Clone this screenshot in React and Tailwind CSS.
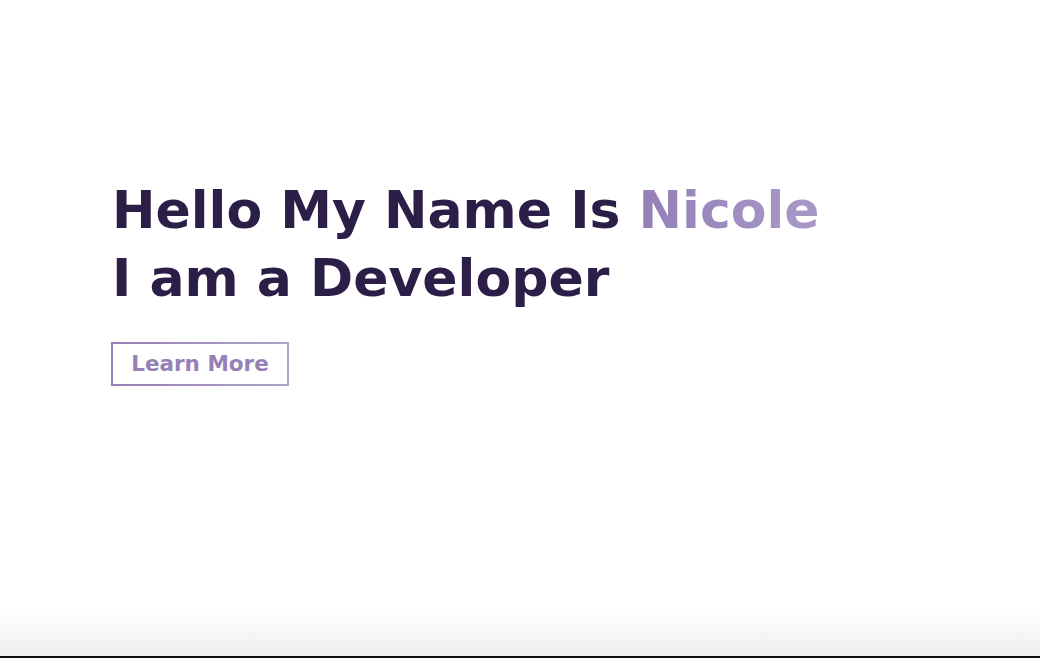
export default function App() {
  return (
    <div className="w-full h-[658px] bg-white flex flex-col font-['DejaVu_Sans',sans-serif]">
      <section className="flex-1 px-[112px] pt-[176px]">
        <h1 className="text-[52px] leading-[68px] font-bold text-[#2b1f47]">
          Hello My Name Is{" "}
          <span className="bg-gradient-to-r from-[#9480b7] to-[#a999c7] bg-clip-text text-transparent">
            Nicole
          </span>
          <br />I am a Developer
        </h1>
        <div className="mt-[30px] -ml-px inline-block p-[2px] bg-gradient-to-r from-[#9480b7] to-[#b0a2cc]">
          <button className="block bg-white w-[174px] h-[40px] text-[21.5px] font-bold text-[#9580b8]">
            Learn More
          </button>
        </div>
      </section>
      <div className="h-[46px] bg-gradient-to-b from-white to-[#eeeeee]" />
      <div className="h-[2px] bg-[#111111]" />
    </div>
  );
}
